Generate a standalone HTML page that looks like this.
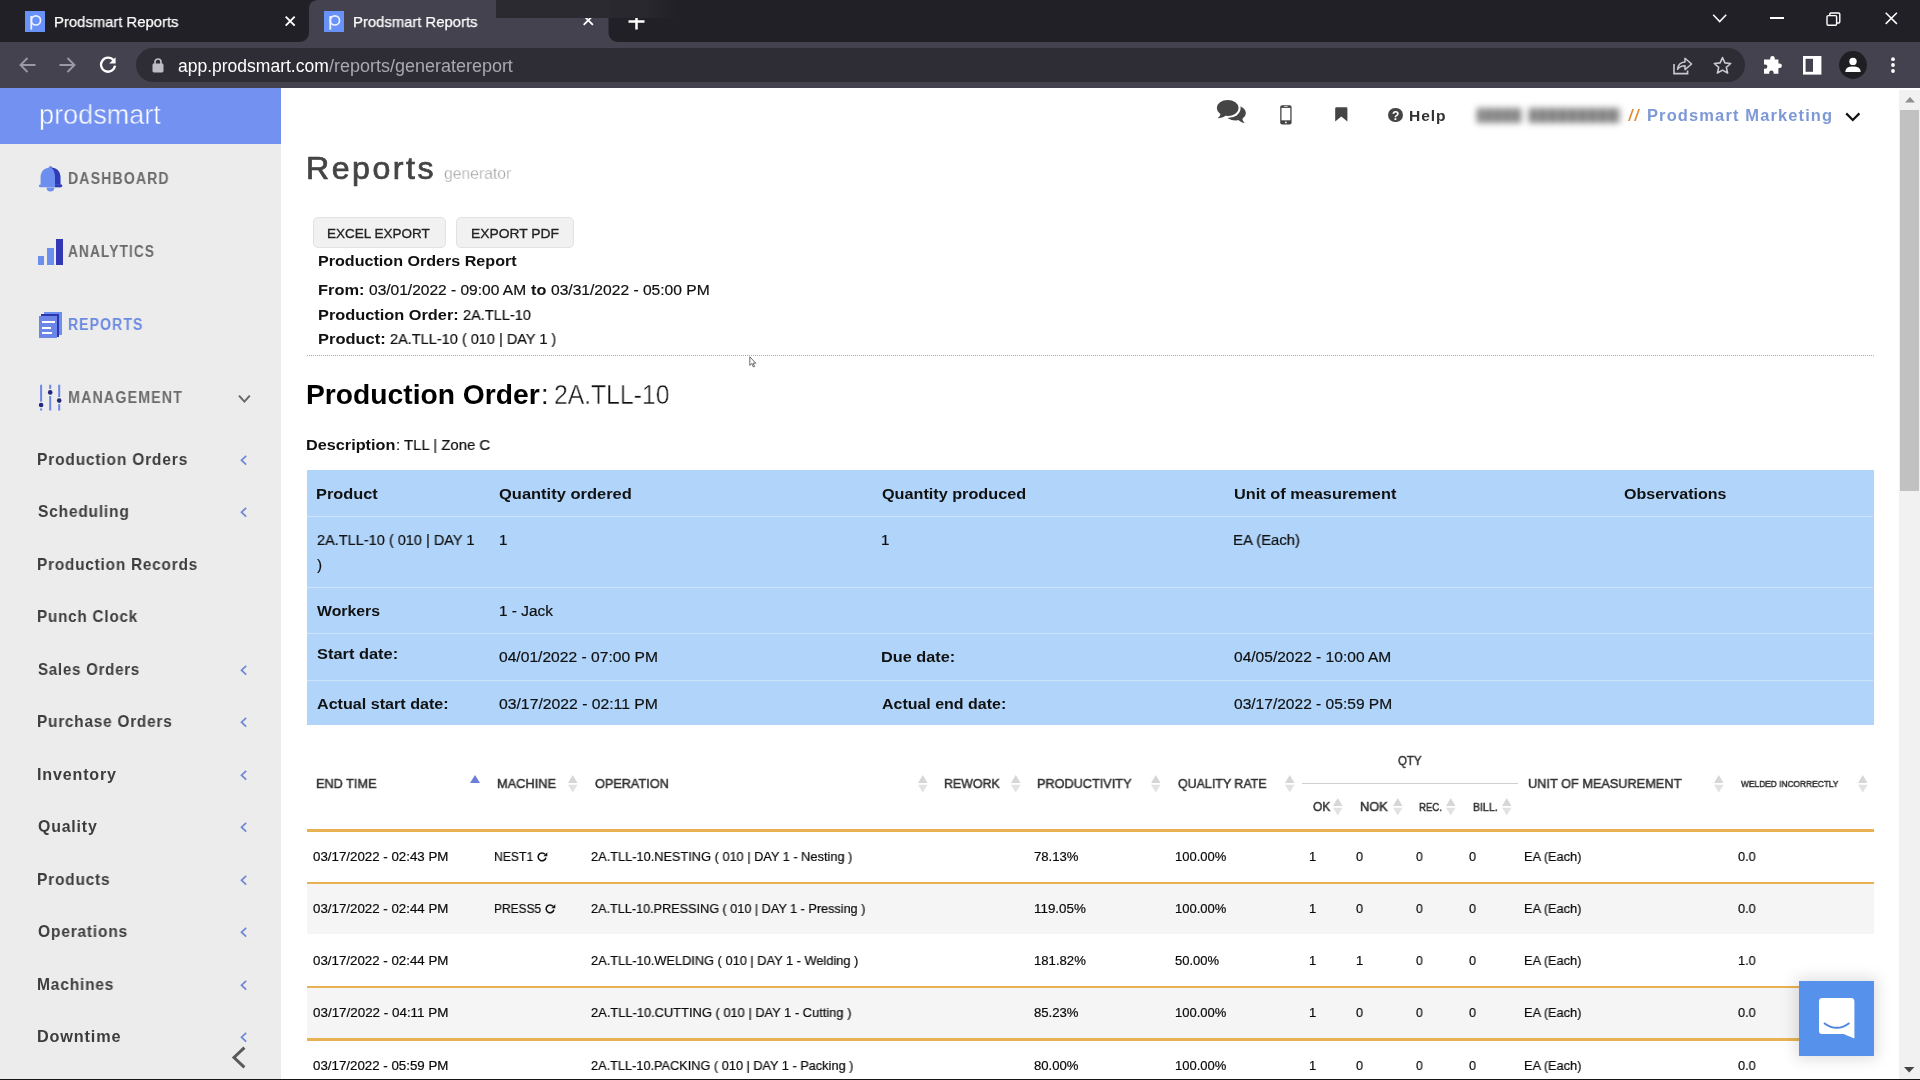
<!DOCTYPE html>
<html lang="en">
<head>
<meta charset="utf-8">
<title>Prodsmart Reports</title>
<style>
*{box-sizing:border-box;margin:0;padding:0}
html,body{width:1920px;height:1080px;overflow:hidden;background:#fff}
body{font-family:"Liberation Sans",sans-serif;color:#111;position:relative}
.a{position:absolute}
.t{position:absolute;white-space:nowrap;line-height:1;transform-origin:0 0;will-change:transform}
svg{position:absolute;overflow:visible}
.sb{-webkit-text-stroke:0.35px currentColor}
.r{-webkit-text-stroke:0.2px #0a0a0a}
</style>
</head>
<body>
<div class="a" style="left:0;top:0;width:1920px;height:42px;background:#212026"></div>
<div class="a" style="left:0;top:42px;width:1920px;height:46.4px;background:#43424e"></div>
<svg style="left:299.2px;top:0" width="320" height="42" viewBox="0 0 320 42"><path d="M0 42 C6 42 10 38 10 32 L10 9 C10 3.5 13.5 0 19 0 L300.5 0 C306 0 309.500 3.5 309.500 9 L309.500 32 C309.500 38 313.500 42 319.500 42 Z" fill="#43424e"/></svg>
<div class="a" style="left:496px;top:0;width:113px;height:18.4px;background:#2b2a30"></div>
<div class="a" style="left:24.7px;top:11px;width:20.5px;height:21px;background:#6892f8"></div><svg style="left:24.7px;top:11px" width="20.5" height="21" viewBox="0 0 20.5 21"><circle cx="10.9" cy="9.4" r="4.6" fill="none" stroke="#eef2ff" stroke-width="1.7"/><path d="M6.3 5 V18.6" stroke="#eef2ff" stroke-width="1.8" fill="none"/></svg>
<div class="a" style="left:323.7px;top:11px;width:20.5px;height:21px;background:#6892f8"></div><svg style="left:323.7px;top:11px" width="20.5" height="21" viewBox="0 0 20.5 21"><circle cx="10.9" cy="9.4" r="4.6" fill="none" stroke="#eef2ff" stroke-width="1.7"/><path d="M6.3 5 V18.6" stroke="#eef2ff" stroke-width="1.8" fill="none"/></svg>
<span class="t" style="left:54.31px;top:14.00px;font-size:15px;color:#fff;transform:scaleX(0.9890);-webkit-text-stroke:0.25px #fff;">Prodsmart Reports</span>
<span class="t" style="left:353.31px;top:14.00px;font-size:15px;color:#fff;transform:scaleX(0.9890);-webkit-text-stroke:0.25px #fff;">Prodsmart Reports</span>
<svg style="left:284.90000000000003px;top:16.1px" width="10.4" height="10.4" viewBox="0 0 10.4 10.4"><path d="M0.7 0.7 L9.700000000000001 9.700000000000001 M9.700000000000001 0.7 L0.7 9.700000000000001" stroke="#fff" stroke-width="1.9" fill="none"/></svg>
<svg style="left:583.4000000000001px;top:15.2px" width="10.6" height="10.6" viewBox="0 0 10.6 10.6"><path d="M0.7 0.7 L9.9 9.9 M9.9 0.7 L0.7 9.9" stroke="#fff" stroke-width="1.9" fill="none"/></svg>
<div class="a" style="left:580px;top:0;width:20px;height:18.4px;background:#2b2a30"></div>
<svg style="left:627.7px;top:12.8px" width="17" height="17" viewBox="0 0 17 17"><path d="M8.5 0.5 V16.5 M0.5 8.5 H16.5" stroke="#fff" stroke-width="2.5" fill="none"/></svg>
<div class="a" style="left:609px;top:0;width:70px;height:18.4px;background:linear-gradient(90deg,#29282e 0,#28272d 55%,#212026 100%)"></div>
<svg style="left:1712px;top:13px" width="16" height="11" viewBox="0 0 16 11"><path d="M1.2 1.8 L7.7 8.6 L14.2 1.8" stroke="#fff" stroke-width="1.5" fill="none"/></svg>
<div class="a" style="left:1769.5px;top:17px;width:14px;height:2px;background:#fff"></div>
<svg style="left:1826px;top:11.5px" width="15" height="15" viewBox="0 0 15 15"><rect x="1" y="3.6" width="9.6" height="9.6" rx="1.2" fill="none" stroke="#fff" stroke-width="1.4"/><path d="M3.8 3.4 V2.2 Q3.8 1 5 1 H12.6 Q13.8 1 13.8 2.2 V9.8 Q13.8 11 12.6 11 H11" fill="none" stroke="#fff" stroke-width="1.4"/></svg>
<svg style="left:1884.9px;top:12.099999999999998px" width="12.6" height="12.6" viewBox="0 0 12.6 12.6"><path d="M0.7 0.7 L11.9 11.9 M11.9 0.7 L0.7 11.9" stroke="#fff" stroke-width="1.5" fill="none"/></svg>
<svg style="left:19px;top:57px" width="17" height="16" viewBox="0 0 17 16"><path d="M16.5 8 H2 M8.5 1 L1.5 8 L8.5 15" stroke="#9a99a4" stroke-width="1.9" fill="none"/></svg>
<svg style="left:59px;top:57px" width="17" height="16" viewBox="0 0 17 16"><path d="M0.5 8 H15 M8.5 1 L15.5 8 L8.5 15" stroke="#9a99a4" stroke-width="1.9" fill="none"/></svg>
<svg style="left:99px;top:56px" width="18" height="18" viewBox="0 0 18 18"><path d="M14.6 4.4 A7 7 0 1 0 16 9.6" stroke="#fff" stroke-width="2.3" fill="none"/><path d="M16.6 1.2 V7.6 H10.2 Z" fill="#fff"/></svg>
<div class="a" style="left:136px;top:48px;width:1609px;height:34px;border-radius:17px;background:#2e2d35"></div>
<svg style="left:152px;top:58px" width="12" height="15" viewBox="0 0 12 15"><rect x="0.5" y="5.6" width="11" height="8.9" rx="1.4" fill="#bebdc6"/><path d="M3 6 V4 A3 3 0 0 1 9 4 V6" stroke="#bebdc6" stroke-width="1.7" fill="none"/></svg>
<span class="t" style="left:177.50px;top:58.00px;font-size:17.5px;color:#fff;">app.prodsmart.com</span>
<span class="t" style="left:329.00px;top:58.00px;font-size:17.5px;color:#a9a8b2;transform:scaleX(1.0272);">/reports/generatereport</span>
<svg style="left:1673px;top:56px" width="20" height="19" viewBox="0 0 20 19"><path d="M1 8 V17.6 H14.6 V14.6" stroke="#c9c8d1" stroke-width="1.6" fill="none"/><path d="M4.6 13.4 C5 8.6 8 6.2 12 6 V2.2 L18.6 8 L12 13.6 V9.8 C9 9.8 6.4 10.8 4.6 13.4 Z" stroke="#c9c8d1" stroke-width="1.5" fill="none" stroke-linejoin="round"/></svg>
<svg style="left:1713px;top:56px" width="19" height="18" viewBox="0 0 19 18"><path d="M9.5 1.6 L11.9 6.9 L17.7 7.5 L13.3 11.4 L14.6 17 L9.5 14.1 L4.4 17 L5.7 11.4 L1.3 7.5 L7.1 6.9 Z" stroke="#c9c8d1" stroke-width="1.6" fill="none" stroke-linejoin="round"/></svg>
<svg style="left:1763px;top:55px" width="20" height="20" viewBox="0 0 20 20"><path d="M7.2 3.4 A2.3 2.3 0 0 1 11.8 3.4 V4.6 H15.4 V8.4 H16.6 A2.3 2.3 0 0 1 16.6 13 H15.4 V18.8 H10.6 V17.6 A2.2 2.2 0 0 0 6.2 17.6 V18.8 H1 V13.8 H2.2 A2.2 2.2 0 0 0 2.2 9.4 H1 V4.6 H7.2 Z" fill="#fff"/></svg>
<svg style="left:1803px;top:55.5px" width="19" height="19" viewBox="0 0 19 19"><rect x="0" y="0" width="18.4" height="18.6" fill="#fff"/><rect x="2.6" y="2.8" width="7.4" height="13" fill="#43424e"/></svg>
<svg style="left:1838.6px;top:51.2px" width="28" height="28" viewBox="0 0 28 28"><circle cx="14" cy="14" r="13.9" fill="#1f1e23"/><circle cx="14" cy="10.4" r="3.7" fill="#fff"/><path d="M6.4 20.6 C6.4 16.6 10 15.4 14 15.4 C18 15.4 21.6 16.6 21.6 20.6 V21 H6.4 Z" fill="#fff"/></svg>
<svg style="left:1889.5px;top:56px" width="6" height="18" viewBox="0 0 6 18"><circle cx="3" cy="3.2" r="1.9" fill="#fff"/><circle cx="3" cy="9" r="1.9" fill="#fff"/><circle cx="3" cy="15" r="1.9" fill="#fff"/></svg>
<div class="a" style="left:0;top:88px;width:281px;height:992px;background:#ececec"></div>
<div class="a" style="left:0;top:88px;width:281px;height:56px;background:#7391f0"></div>
<span class="t" style="left:39.01px;top:101.00px;font-size:27.3px;color:#fff;transform:scaleX(0.9915);-webkit-text-stroke:0.45px #7391f0;">prodsmart</span>
<span class="t" style="left:67.87px;top:171.00px;font-size:16px;color:#6b6b6b;font-weight:bold;letter-spacing:1.3px;transform:scaleX(0.8795);">DASHBOARD</span>
<span class="t" style="left:68.00px;top:244.00px;font-size:16px;color:#6b6b6b;font-weight:bold;letter-spacing:1.3px;transform:scaleX(0.8555);">ANALYTICS</span>
<span class="t" style="left:67.88px;top:317.00px;font-size:16px;color:#6c8ae2;font-weight:bold;letter-spacing:1.3px;transform:scaleX(0.8731);">REPORTS</span>
<span class="t" style="left:67.86px;top:390.00px;font-size:16px;color:#6b6b6b;font-weight:bold;letter-spacing:1.3px;transform:scaleX(0.8892);">MANAGEMENT</span>
<svg style="left:38px;top:165px" width="25" height="28" viewBox="0 0 25 28"><path d="M8.6 22.6 A3.9 3.9 0 0 0 16.4 22.6 Z" fill="#6c8eef"/><circle cx="12.5" cy="2.6" r="1.7" fill="#6c8eef"/><path d="M2.6 20 V12.2 C2.6 6 6.6 2.4 12.5 2.4 C18.4 2.4 22.4 6 22.4 12.2 V20 Z" fill="#6c8eef"/><path d="M12.5 2.4 C18.4 2.4 22.4 6 22.4 12.2 V20 H17 V12 C17 7 15.4 3.6 12.5 2.4 Z" fill="#2f3bb7"/><rect x="0.9" y="19.4" width="23.3" height="2.9" rx="1.4" fill="#6c8eef"/><path d="M17 19.4 H22.8 A1.4 1.4 0 0 1 22.8 22.3 H17 Z" fill="#2f3bb7"/></svg>
<div class="a" style="left:37.8px;top:256.1px;width:6.5px;height:8.8px;background:#6c8eef"></div>
<div class="a" style="left:47px;top:248.1px;width:6.7px;height:16.8px;background:#6c8eef"></div>
<div class="a" style="left:56.1px;top:238.9px;width:6.7px;height:26px;background:#3538b4"></div>
<div class="a" style="left:43.9px;top:311.7px;width:17.8px;height:23.3px;background:#6c8eef"></div>
<div class="a" style="left:41.1px;top:313.9px;width:18.3px;height:22.8px;background:#2b36b0"></div>
<div class="a" style="left:38.9px;top:316.1px;width:18.3px;height:21.7px;background:#6b86e6"></div>
<div class="a" style="left:41.7px;top:320.6px;width:13px;height:2.2px;background:#fff"></div>
<div class="a" style="left:41.7px;top:326.6px;width:9.4px;height:2.1px;background:#fff"></div>
<div class="a" style="left:41.7px;top:332.2px;width:10.6px;height:2.2px;background:#fff"></div>
<svg style="left:38px;top:384px" width="25" height="28" viewBox="0 0 25 28"><path d="M3.1 0.7 V26.6 M12.2 0.7 V26.6 M21.2 0.7 V26.6" stroke="#6b86e6" stroke-width="2"/><circle cx="3.1" cy="21" r="3.6" fill="#ececec"/><circle cx="12.2" cy="8.4" r="3.6" fill="#ececec"/><circle cx="21.2" cy="16.6" r="3.6" fill="#ececec"/><circle cx="3.1" cy="21" r="2.3" fill="#23277f"/><circle cx="12.2" cy="8.4" r="2.3" fill="#23277f"/><circle cx="21.2" cy="16.6" r="2.3" fill="#23277f"/></svg>
<svg style="left:238px;top:394px" width="13" height="10" viewBox="0 0 13 10"><path d="M1 1.6 L6.4 7.6 L11.8 1.6" stroke="#666" stroke-width="2" fill="none"/></svg>
<span class="t" style="left:37.01px;top:452.00px;font-size:15.7px;color:#3d3d3d;font-weight:bold;letter-spacing:0.8px;transform:scaleX(0.9923);">Production Orders</span>
<svg style="left:239.6px;top:455.40px" width="7.4" height="10.4" viewBox="0 0 7.4 10.4"><path d="M6.2 0.8 L1.5 5.2 L6.2 9.600" stroke="#6d87d6" stroke-width="1.7" fill="none"/></svg>
<span class="t" style="left:38.00px;top:504.00px;font-size:15.7px;color:#3d3d3d;font-weight:bold;letter-spacing:0.8px;transform:scaleX(0.9900);">Scheduling</span>
<svg style="left:239.6px;top:507.40px" width="7.4" height="10.4" viewBox="0 0 7.4 10.4"><path d="M6.2 0.8 L1.5 5.2 L6.2 9.600" stroke="#6d87d6" stroke-width="1.7" fill="none"/></svg>
<span class="t" style="left:37.02px;top:557.00px;font-size:15.7px;color:#3d3d3d;font-weight:bold;letter-spacing:0.8px;transform:scaleX(0.9798);">Production Records</span>
<span class="t" style="left:37.03px;top:609.00px;font-size:15.7px;color:#3d3d3d;font-weight:bold;letter-spacing:0.8px;transform:scaleX(0.9727);">Punch Clock</span>
<span class="t" style="left:38.00px;top:662.00px;font-size:15.7px;color:#3d3d3d;font-weight:bold;letter-spacing:0.8px;transform:scaleX(0.9587);">Sales Orders</span>
<svg style="left:239.6px;top:665.40px" width="7.4" height="10.4" viewBox="0 0 7.4 10.4"><path d="M6.2 0.8 L1.5 5.2 L6.2 9.600" stroke="#6d87d6" stroke-width="1.7" fill="none"/></svg>
<span class="t" style="left:37.02px;top:714.00px;font-size:15.7px;color:#3d3d3d;font-weight:bold;letter-spacing:0.8px;transform:scaleX(0.9787);">Purchase Orders</span>
<svg style="left:239.6px;top:717.40px" width="7.4" height="10.4" viewBox="0 0 7.4 10.4"><path d="M6.2 0.8 L1.5 5.2 L6.2 9.600" stroke="#6d87d6" stroke-width="1.7" fill="none"/></svg>
<span class="t" style="left:36.97px;top:767.00px;font-size:15.7px;color:#3d3d3d;font-weight:bold;letter-spacing:0.8px;transform:scaleX(1.0258);">Inventory</span>
<svg style="left:239.6px;top:770.40px" width="7.4" height="10.4" viewBox="0 0 7.4 10.4"><path d="M6.2 0.8 L1.5 5.2 L6.2 9.600" stroke="#6d87d6" stroke-width="1.7" fill="none"/></svg>
<span class="t" style="left:38.00px;top:819.00px;font-size:15.7px;color:#3d3d3d;font-weight:bold;letter-spacing:0.8px;transform:scaleX(1.0129);">Quality</span>
<svg style="left:239.6px;top:822.40px" width="7.4" height="10.4" viewBox="0 0 7.4 10.4"><path d="M6.2 0.8 L1.5 5.2 L6.2 9.600" stroke="#6d87d6" stroke-width="1.7" fill="none"/></svg>
<span class="t" style="left:37.01px;top:872.00px;font-size:15.7px;color:#3d3d3d;font-weight:bold;letter-spacing:0.8px;transform:scaleX(0.9881);">Products</span>
<svg style="left:239.6px;top:875.40px" width="7.4" height="10.4" viewBox="0 0 7.4 10.4"><path d="M6.2 0.8 L1.5 5.2 L6.2 9.600" stroke="#6d87d6" stroke-width="1.7" fill="none"/></svg>
<span class="t" style="left:38.00px;top:924.00px;font-size:15.7px;color:#3d3d3d;font-weight:bold;letter-spacing:0.8px;transform:scaleX(0.9913);">Operations</span>
<svg style="left:239.6px;top:927.40px" width="7.4" height="10.4" viewBox="0 0 7.4 10.4"><path d="M6.2 0.8 L1.5 5.2 L6.2 9.600" stroke="#6d87d6" stroke-width="1.7" fill="none"/></svg>
<span class="t" style="left:37.01px;top:977.00px;font-size:15.7px;color:#3d3d3d;font-weight:bold;letter-spacing:0.8px;transform:scaleX(0.9919);">Machines</span>
<svg style="left:239.6px;top:980.40px" width="7.4" height="10.4" viewBox="0 0 7.4 10.4"><path d="M6.2 0.8 L1.5 5.2 L6.2 9.600" stroke="#6d87d6" stroke-width="1.7" fill="none"/></svg>
<span class="t" style="left:36.96px;top:1029.00px;font-size:15.7px;color:#3d3d3d;font-weight:bold;letter-spacing:0.8px;transform:scaleX(1.0366);">Downtime</span>
<svg style="left:239.6px;top:1032.40px" width="7.4" height="10.4" viewBox="0 0 7.4 10.4"><path d="M6.2 0.8 L1.5 5.2 L6.2 9.600" stroke="#6d87d6" stroke-width="1.7" fill="none"/></svg>
<svg style="left:231px;top:1046px" width="16" height="23" viewBox="0 0 16 23"><path d="M13.4 1.6 L3 11.5 L13.4 21.4" stroke="#5a5a5a" stroke-width="3" fill="none"/></svg>
<svg style="left:1216px;top:99px" width="31" height="25" viewBox="0 0 31 25"><ellipse cx="19.5" cy="14" rx="10.4" ry="7.4" fill="#454545"/><path d="M22 20.4 C24.2 22.6 26.4 23.6 28.6 23.9 C27.2 22.6 26.5 21 26.3 19 Z" fill="#454545"/><ellipse cx="11.7" cy="9" rx="12.9" ry="10.1" fill="#fff"/><path d="M3.2 14 C3 16.8 2 18.600 0 20.600 C4.4 20.600 8.4 19.2 11.4 17 Z" fill="#fff"/><ellipse cx="11.7" cy="9" rx="10.9" ry="8.1" fill="#454545"/><path d="M4.600 14.4 C4.3 16.4 3.2 18 1.6 19.3 C4.600 19.100 7.600 18.2 9.800 16.5 Z" fill="#454545"/></svg>
<svg style="left:1280.3px;top:105.4px" width="12" height="20" viewBox="0 0 12 20"><rect x="0.2" y="0.2" width="11.4" height="19.2" rx="1.9" fill="#454545"/><rect x="1.5" y="2.9" width="8.8" height="12.4" fill="#fff"/><circle cx="5.9" cy="17.4" r="0.9" fill="#fff"/><rect x="4.2" y="1.2" width="3.4" height="0.7" fill="#fff"/></svg>
<svg style="left:1335px;top:107.2px" width="13" height="15" viewBox="0 0 13 15"><path d="M0.2 1.4 Q0.2 0.2 1.4 0.2 H11.2 Q12.4 0.2 12.4 1.4 V14.6 L6.3 9.6 L0.2 14.6 Z" fill="#454545"/></svg>
<div class="a" style="left:1388.2px;top:107.9px;width:14.6px;height:14.6px;border-radius:50%;background:#454545"></div>
<span class="t" style="left:1392.30px;top:110.00px;font-size:12px;color:#fff;font-weight:bold;">?</span>
<span class="t" style="left:1408.69px;top:108.00px;font-size:15.5px;color:#333;font-weight:bold;letter-spacing:0.9px;transform:scaleX(1.0052);">Help</span>
<div class="a" style="left:1470px;top:100px;width:158px;height:32px;filter:blur(3.1px)"><div class="a" style="left:7px;top:8px;width:45px;height:15px;background:repeating-linear-gradient(90deg,#7a7a7a 0,#7a7a7a 6px,#adadad 6px,#adadad 9px)"></div><div class="a" style="left:59px;top:8px;width:91px;height:15px;background:repeating-linear-gradient(90deg,#7a7a7a 0,#7a7a7a 7px,#adadad 7px,#adadad 10px)"></div></div>
<span class="t" style="left:1628.40px;top:108.00px;font-size:16px;color:#e08a2e;transform:scaleX(1.3340);">//</span>
<span class="t" style="left:1646.97px;top:108.00px;font-size:16px;color:#7d98d6;font-weight:bold;letter-spacing:1.1px;transform:scaleX(1.0294);">Prodsmart Marketing</span>
<svg style="left:1845px;top:111.5px" width="16" height="10" viewBox="0 0 16 10"><path d="M1.2 1.4 L7.8 8 L14.4 1.4" stroke="#111" stroke-width="2.2" fill="none"/></svg>
<span class="t" style="left:305.91px;top:154.00px;font-size:30.7px;color:#444;letter-spacing:2.4px;transform:scaleX(1.0460);-webkit-text-stroke:0.7px #444;">Reports</span>
<span class="t" style="left:444.00px;top:165.00px;font-size:16.2px;color:#a2a2a2;transform:scaleX(0.9685);-webkit-text-stroke:0.3px #fff;">generator</span>
<div class="a" style="left:313px;top:217px;width:133.3px;height:30.5px;background:#f1f1f1;border:1.5px solid #e2e2e2;border-radius:5px"></div>
<span class="t" style="left:327.28px;top:227.00px;font-size:13.3px;color:#222;transform:scaleX(1.0158);-webkit-text-stroke:0.3px #222;">EXCEL EXPORT</span>
<div class="a" style="left:456.3px;top:217px;width:117.69999999999999px;height:30.5px;background:#f1f1f1;border:1.5px solid #e2e2e2;border-radius:5px"></div>
<span class="t" style="left:470.66px;top:227.00px;font-size:13.3px;color:#222;transform:scaleX(1.0407);-webkit-text-stroke:0.3px #222;">EXPORT PDF</span>
<span class="t" style="left:318.44px;top:253.00px;font-size:15.2px;color:#111;font-weight:bold;transform:scaleX(1.0603);">Production Orders Report</span>
<span class="t" style="left:318.42px;top:282.00px;font-size:15.2px;color:#111;font-weight:bold;transform:scaleX(1.0801);">From:</span>
<span class="t r" style="left:368.75px;top:282.00px;font-size:15.2px;color:#111;transform:scaleX(1.0220);">03/01/2022 - 09:00 AM</span>
<span class="t" style="left:531.00px;top:282.00px;font-size:15.2px;color:#111;font-weight:bold;transform:scaleX(1.0670);">to</span>
<span class="t r" style="left:550.75px;top:282.00px;font-size:15.2px;color:#111;transform:scaleX(1.0269);">03/31/2022 - 05:00 PM</span>
<span class="t" style="left:318.42px;top:307.00px;font-size:15.2px;color:#111;font-weight:bold;transform:scaleX(1.0759);">Production Order:</span>
<span class="t r" style="left:463.00px;top:307.00px;font-size:15.2px;color:#111;transform:scaleX(0.9578);">2A.TLL-10</span>
<span class="t" style="left:318.42px;top:331.00px;font-size:15.2px;color:#111;font-weight:bold;transform:scaleX(1.0849);">Product:</span>
<span class="t r" style="left:389.50px;top:331.00px;font-size:15.2px;color:#111;transform:scaleX(0.9562);">2A.TLL-10 ( 010 | DAY 1 )</span>
<div class="a" style="left:307px;top:354.6px;width:1567px;height:0;border-top:1.4px dotted #a8a8a8"></div>
<svg style="left:749px;top:355.5px" width="8" height="12" viewBox="0 0 8 12"><path d="M0.8 0.8 V9.4 L2.8 7.6 L4.4 11 L5.6 10.4 L4 7.2 H6.8 Z" fill="#fff" stroke="#444" stroke-width="0.8"/></svg>
<span class="t" style="left:306.47px;top:381.00px;font-size:27.4px;color:#000;font-weight:bold;transform:scaleX(1.0306);">Production Order</span>
<span class="t" style="left:541.20px;top:381.00px;font-size:27.4px;color:#111;">:</span>
<span class="t" style="left:554.10px;top:381.00px;font-size:27.4px;color:#111;transform:scaleX(0.9020);-webkit-text-stroke:0.45px #fff;">2A.TLL-10</span>
<span class="t" style="left:305.93px;top:437.00px;font-size:15.2px;color:#111;font-weight:bold;transform:scaleX(1.0697);">Description</span>
<span class="t r" style="left:395.60px;top:437.00px;font-size:15.2px;color:#111;">:</span>
<span class="t r" style="left:403.75px;top:437.00px;font-size:15.2px;color:#111;transform:scaleX(0.9814);">TLL | Zone C</span>
<div class="a" style="left:307px;top:469.5px;width:1567px;height:255.5px;background:#b1d5fa"></div>
<div class="a" style="left:307px;top:516px;width:1566px;height:1.2px;background:#cde3f9"></div>
<div class="a" style="left:307px;top:587px;width:1566px;height:1.2px;background:#cde3f9"></div>
<div class="a" style="left:307px;top:633.2px;width:1566px;height:1.2px;background:#cde3f9"></div>
<div class="a" style="left:307px;top:679.5px;width:1566px;height:1.2px;background:#cde3f9"></div>
<span class="t" style="left:315.93px;top:486.00px;font-size:15.2px;color:#111;font-weight:bold;transform:scaleX(1.0743);">Product</span>
<span class="t" style="left:499.25px;top:486.00px;font-size:15.2px;color:#111;font-weight:bold;transform:scaleX(1.0853);">Quantity ordered</span>
<span class="t" style="left:881.75px;top:486.00px;font-size:15.2px;color:#111;font-weight:bold;transform:scaleX(1.0670);">Quantity produced</span>
<span class="t" style="left:1233.75px;top:486.00px;font-size:15.2px;color:#111;font-weight:bold;transform:scaleX(1.0745);">Unit of measurement</span>
<span class="t" style="left:1623.50px;top:486.00px;font-size:15.2px;color:#111;font-weight:bold;transform:scaleX(1.0557);">Observations</span>
<span class="t r" style="left:317.00px;top:532.00px;font-size:15.2px;color:#111;transform:scaleX(0.9562);">2A.TLL-10 ( 010 | DAY 1</span>
<span class="t r" style="left:316.60px;top:557.00px;font-size:15.2px;color:#111;">)</span>
<span class="t r" style="left:498.60px;top:532.00px;font-size:15.2px;color:#111;">1</span>
<span class="t r" style="left:881.00px;top:532.00px;font-size:15.2px;color:#111;">1</span>
<span class="t r" style="left:1232.77px;top:532.00px;font-size:15.2px;color:#111;transform:scaleX(0.9794);">EA (Each)</span>
<span class="t" style="left:317.00px;top:603.00px;font-size:15.2px;color:#111;font-weight:bold;transform:scaleX(1.0408);">Workers</span>
<span class="t r" style="left:498.99px;top:603.00px;font-size:15.2px;color:#111;transform:scaleX(1.0128);">1 - Jack</span>
<span class="t" style="left:317.00px;top:646.00px;font-size:15.2px;color:#111;font-weight:bold;transform:scaleX(1.0804);">Start date:</span>
<span class="t r" style="left:499.25px;top:649.00px;font-size:15.2px;color:#111;transform:scaleX(1.0285);">04/01/2022 - 07:00 PM</span>
<span class="t" style="left:880.83px;top:649.00px;font-size:15.2px;color:#111;font-weight:bold;transform:scaleX(1.0724);">Due date:</span>
<span class="t r" style="left:1233.90px;top:649.00px;font-size:15.2px;color:#111;transform:scaleX(1.0236);">04/05/2022 - 10:00 AM</span>
<span class="t" style="left:317.00px;top:696.00px;font-size:15.2px;color:#111;font-weight:bold;transform:scaleX(1.0610);">Actual start date:</span>
<span class="t r" style="left:499.25px;top:696.00px;font-size:15.2px;color:#111;transform:scaleX(1.0361);">03/17/2022 - 02:11 PM</span>
<span class="t" style="left:881.90px;top:696.00px;font-size:15.2px;color:#111;font-weight:bold;transform:scaleX(1.0514);">Actual end date:</span>
<span class="t r" style="left:1233.90px;top:696.00px;font-size:15.2px;color:#111;transform:scaleX(1.0236);">03/17/2022 - 05:59 PM</span>
<span class="t" style="left:316.04px;top:777.00px;font-size:13.2px;color:#333;transform:scaleX(0.9644);-webkit-text-stroke:0.5px #333;">END TIME</span>
<span class="t" style="left:497.03px;top:777.00px;font-size:13.2px;color:#333;transform:scaleX(0.9706);-webkit-text-stroke:0.5px #333;">MACHINE</span>
<span class="t" style="left:595.00px;top:777.00px;font-size:13.2px;color:#333;transform:scaleX(0.9617);-webkit-text-stroke:0.5px #333;">OPERATION</span>
<span class="t" style="left:944.06px;top:777.00px;font-size:13.2px;color:#333;transform:scaleX(0.9394);-webkit-text-stroke:0.5px #333;">REWORK</span>
<span class="t" style="left:1037.04px;top:777.00px;font-size:13.2px;color:#333;transform:scaleX(0.9627);-webkit-text-stroke:0.5px #333;">PRODUCTIVITY</span>
<span class="t" style="left:1178.00px;top:777.00px;font-size:13.2px;color:#333;transform:scaleX(0.9419);-webkit-text-stroke:0.5px #333;">QUALITY RATE</span>
<span class="t" style="left:1398.00px;top:754.00px;font-size:13.2px;color:#333;transform:scaleX(0.8695);-webkit-text-stroke:0.5px #333;">QTY</span>
<span class="t" style="left:1312.50px;top:800.00px;font-size:13.2px;color:#333;transform:scaleX(0.9087);-webkit-text-stroke:0.5px #333;">OK</span>
<span class="t" style="left:1359.53px;top:800.00px;font-size:13.2px;color:#333;transform:scaleX(0.9719);-webkit-text-stroke:0.5px #333;">NOK</span>
<span class="t" style="left:1419.25px;top:802.00px;font-size:11.5px;color:#333;transform:scaleX(0.8339);-webkit-text-stroke:0.5px #333;">REC.</span>
<span class="t" style="left:1472.50px;top:802.00px;font-size:11.5px;color:#333;transform:scaleX(0.9191);-webkit-text-stroke:0.5px #333;">BILL.</span>
<span class="t" style="left:1527.78px;top:777.00px;font-size:13.2px;color:#333;transform:scaleX(0.9656);-webkit-text-stroke:0.5px #333;">UNIT OF MEASUREMENT</span>
<span class="t" style="left:1740.70px;top:780.00px;font-size:9.3px;color:#333;transform:scaleX(0.9001);-webkit-text-stroke:0.5px #333;">WELDED INCORRECTLY</span>
<div class="a" style="left:1302px;top:783px;width:215.5px;height:1px;background:#d0d0d0"></div>
<svg style="left:470px;top:775px" width="10" height="8" viewBox="0 0 10 8"><path d="M5 0 L10 8 H0 Z" fill="#6c7fd8"/></svg>
<svg style="left:568px;top:775px" width="9.5" height="17.5" viewBox="0 0 9.5 17.5"><path d="M4.75 0 L9.5 8 H0 Z" fill="#d6d6d6"/><path d="M0 9.8 H9.5 L4.75 17.5 Z" fill="#e2e2e2"/></svg>
<svg style="left:917.5px;top:775px" width="9.5" height="17.5" viewBox="0 0 9.5 17.5"><path d="M4.75 0 L9.5 8 H0 Z" fill="#d6d6d6"/><path d="M0 9.8 H9.5 L4.75 17.5 Z" fill="#e2e2e2"/></svg>
<svg style="left:1010.5px;top:775px" width="9.5" height="17.5" viewBox="0 0 9.5 17.5"><path d="M4.75 0 L9.5 8 H0 Z" fill="#d6d6d6"/><path d="M0 9.8 H9.5 L4.75 17.5 Z" fill="#e2e2e2"/></svg>
<svg style="left:1150.75px;top:775px" width="9.5" height="17.5" viewBox="0 0 9.5 17.5"><path d="M4.75 0 L9.5 8 H0 Z" fill="#d6d6d6"/><path d="M0 9.8 H9.5 L4.75 17.5 Z" fill="#e2e2e2"/></svg>
<svg style="left:1285px;top:775px" width="9.5" height="17.5" viewBox="0 0 9.5 17.5"><path d="M4.75 0 L9.5 8 H0 Z" fill="#d6d6d6"/><path d="M0 9.8 H9.5 L4.75 17.5 Z" fill="#e2e2e2"/></svg>
<svg style="left:1713.75px;top:775px" width="9.5" height="17.5" viewBox="0 0 9.5 17.5"><path d="M4.75 0 L9.5 8 H0 Z" fill="#d6d6d6"/><path d="M0 9.8 H9.5 L4.75 17.5 Z" fill="#e2e2e2"/></svg>
<svg style="left:1857.5px;top:775px" width="9.5" height="17.5" viewBox="0 0 9.5 17.5"><path d="M4.75 0 L9.5 8 H0 Z" fill="#d6d6d6"/><path d="M0 9.8 H9.5 L4.75 17.5 Z" fill="#e2e2e2"/></svg>
<svg style="left:1333px;top:798px" width="9.5" height="17.5" viewBox="0 0 9.5 17.5"><path d="M4.75 0 L9.5 8 H0 Z" fill="#d6d6d6"/><path d="M0 9.8 H9.5 L4.75 17.5 Z" fill="#e2e2e2"/></svg>
<svg style="left:1392.5px;top:798px" width="9.5" height="17.5" viewBox="0 0 9.5 17.5"><path d="M4.75 0 L9.5 8 H0 Z" fill="#d6d6d6"/><path d="M0 9.8 H9.5 L4.75 17.5 Z" fill="#e2e2e2"/></svg>
<svg style="left:1445.5px;top:798px" width="9.5" height="17.5" viewBox="0 0 9.5 17.5"><path d="M4.75 0 L9.5 8 H0 Z" fill="#d6d6d6"/><path d="M0 9.8 H9.5 L4.75 17.5 Z" fill="#e2e2e2"/></svg>
<svg style="left:1501.75px;top:798px" width="9.5" height="17.5" viewBox="0 0 9.5 17.5"><path d="M4.75 0 L9.5 8 H0 Z" fill="#d6d6d6"/><path d="M0 9.8 H9.5 L4.75 17.5 Z" fill="#e2e2e2"/></svg>
<div class="a" style="left:307px;top:829.30px;width:1567px;height:2.3px;background:#e8b252"></div>
<span class="t r" style="left:313.00px;top:850.00px;font-size:13px;color:#0a0a0a;transform:scaleX(1.0234);">03/17/2022 - 02:43 PM</span>
<span class="t r" style="left:493.57px;top:850.00px;font-size:13px;color:#0a0a0a;transform:scaleX(0.9343);">NEST1</span>
<svg style="left:536.80px;top:852.40px" width="10.5" height="10" viewBox="0 0 10.5 10"><path d="M8 2.3 A3.9 3.9 0 1 0 8.9 5.6" stroke="#111" stroke-width="1.6" fill="none"/><path d="M10.3 0.3 V4.3 H6.3 Z" fill="#111"/></svg>
<span class="t r" style="left:590.75px;top:850.00px;font-size:13px;color:#0a0a0a;transform:scaleX(0.9829);">2A.TLL-10.NESTING ( 010 | DAY 1 - Nesting )</span>
<span class="t r" style="left:1034.25px;top:850.00px;font-size:13px;color:#0a0a0a;transform:scaleX(1.0105);">78.13%</span>
<span class="t r" style="left:1174.50px;top:850.00px;font-size:13px;color:#0a0a0a;">100.00%</span>
<span class="t r" style="left:1309.00px;top:850.00px;font-size:13px;color:#0a0a0a;">1</span>
<span class="t r" style="left:1355.75px;top:850.00px;font-size:13px;color:#0a0a0a;transform:scaleX(0.9643);">0</span>
<span class="t r" style="left:1415.50px;top:850.00px;font-size:13px;color:#0a0a0a;transform:scaleX(0.9286);">0</span>
<span class="t r" style="left:1468.75px;top:850.00px;font-size:13px;color:#0a0a0a;transform:scaleX(0.9643);">0</span>
<span class="t r" style="left:1523.52px;top:850.00px;font-size:13px;color:#0a0a0a;transform:scaleX(0.9799);">EA (Each)</span>
<span class="t r" style="left:1737.50px;top:850.00px;font-size:13px;color:#0a0a0a;transform:scaleX(0.9808);">0.0</span>
<div class="a" style="left:307px;top:881.75px;width:1567px;height:52.25px;background:#f5f5f5"></div>
<div class="a" style="left:307px;top:881.55px;width:1567px;height:2.3px;background:#e8b252"></div>
<span class="t r" style="left:313.00px;top:902.00px;font-size:13px;color:#0a0a0a;transform:scaleX(1.0234);">03/17/2022 - 02:44 PM</span>
<span class="t r" style="left:493.58px;top:902.00px;font-size:13px;color:#0a0a0a;transform:scaleX(0.9187);">PRESS5</span>
<svg style="left:544.80px;top:904.40px" width="10.5" height="10" viewBox="0 0 10.5 10"><path d="M8 2.3 A3.9 3.9 0 1 0 8.9 5.6" stroke="#111" stroke-width="1.6" fill="none"/><path d="M10.3 0.3 V4.3 H6.3 Z" fill="#111"/></svg>
<span class="t r" style="left:590.75px;top:902.00px;font-size:13px;color:#0a0a0a;transform:scaleX(0.9736);">2A.TLL-10.PRESSING ( 010 | DAY 1 - Pressing )</span>
<span class="t r" style="left:1034.25px;top:902.00px;font-size:13px;color:#0a0a0a;transform:scaleX(1.0286);">119.05%</span>
<span class="t r" style="left:1174.50px;top:902.00px;font-size:13px;color:#0a0a0a;">100.00%</span>
<span class="t r" style="left:1309.00px;top:902.00px;font-size:13px;color:#0a0a0a;">1</span>
<span class="t r" style="left:1355.75px;top:902.00px;font-size:13px;color:#0a0a0a;transform:scaleX(0.9643);">0</span>
<span class="t r" style="left:1415.50px;top:902.00px;font-size:13px;color:#0a0a0a;transform:scaleX(0.9286);">0</span>
<span class="t r" style="left:1468.75px;top:902.00px;font-size:13px;color:#0a0a0a;transform:scaleX(0.9643);">0</span>
<span class="t r" style="left:1523.52px;top:902.00px;font-size:13px;color:#0a0a0a;transform:scaleX(0.9799);">EA (Each)</span>
<span class="t r" style="left:1737.50px;top:902.00px;font-size:13px;color:#0a0a0a;transform:scaleX(0.9808);">0.0</span>
<span class="t r" style="left:313.00px;top:954.00px;font-size:13px;color:#0a0a0a;transform:scaleX(1.0234);">03/17/2022 - 02:44 PM</span>
<span class="t r" style="left:590.75px;top:954.00px;font-size:13px;color:#0a0a0a;transform:scaleX(0.9850);">2A.TLL-10.WELDING ( 010 | DAY 1 - Welding )</span>
<span class="t r" style="left:1034.25px;top:954.00px;font-size:13px;color:#0a0a0a;transform:scaleX(1.0094);">181.82%</span>
<span class="t r" style="left:1174.50px;top:954.00px;font-size:13px;color:#0a0a0a;">50.00%</span>
<span class="t r" style="left:1309.00px;top:954.00px;font-size:13px;color:#0a0a0a;">1</span>
<span class="t r" style="left:1356.00px;top:954.00px;font-size:13px;color:#0a0a0a;">1</span>
<span class="t r" style="left:1415.50px;top:954.00px;font-size:13px;color:#0a0a0a;transform:scaleX(0.9286);">0</span>
<span class="t r" style="left:1468.75px;top:954.00px;font-size:13px;color:#0a0a0a;transform:scaleX(0.9643);">0</span>
<span class="t r" style="left:1523.52px;top:954.00px;font-size:13px;color:#0a0a0a;transform:scaleX(0.9799);">EA (Each)</span>
<span class="t r" style="left:1737.50px;top:954.00px;font-size:13px;color:#0a0a0a;transform:scaleX(0.9808);">1.0</span>
<div class="a" style="left:307px;top:986.25px;width:1567px;height:52.25px;background:#f5f5f5"></div>
<div class="a" style="left:307px;top:986.05px;width:1567px;height:2.3px;background:#e8b252"></div>
<span class="t r" style="left:313.00px;top:1006.00px;font-size:13px;color:#0a0a0a;transform:scaleX(1.0309);">03/17/2022 - 04:11 PM</span>
<span class="t r" style="left:590.75px;top:1006.00px;font-size:13px;color:#0a0a0a;transform:scaleX(0.9900);">2A.TLL-10.CUTTING ( 010 | DAY 1 - Cutting )</span>
<span class="t r" style="left:1034.25px;top:1006.00px;font-size:13px;color:#0a0a0a;transform:scaleX(1.0105);">85.23%</span>
<span class="t r" style="left:1174.50px;top:1006.00px;font-size:13px;color:#0a0a0a;">100.00%</span>
<span class="t r" style="left:1309.00px;top:1006.00px;font-size:13px;color:#0a0a0a;">1</span>
<span class="t r" style="left:1355.75px;top:1006.00px;font-size:13px;color:#0a0a0a;transform:scaleX(0.9643);">0</span>
<span class="t r" style="left:1415.50px;top:1006.00px;font-size:13px;color:#0a0a0a;transform:scaleX(0.9286);">0</span>
<span class="t r" style="left:1468.75px;top:1006.00px;font-size:13px;color:#0a0a0a;transform:scaleX(0.9643);">0</span>
<span class="t r" style="left:1523.52px;top:1006.00px;font-size:13px;color:#0a0a0a;transform:scaleX(0.9799);">EA (Each)</span>
<span class="t r" style="left:1737.50px;top:1006.00px;font-size:13px;color:#0a0a0a;transform:scaleX(0.9808);">0.0</span>
<div class="a" style="left:307px;top:1038.30px;width:1567px;height:2.3px;background:#e8b252"></div>
<span class="t r" style="left:313.00px;top:1059.00px;font-size:13px;color:#0a0a0a;transform:scaleX(1.0234);">03/17/2022 - 05:59 PM</span>
<span class="t r" style="left:590.75px;top:1059.00px;font-size:13px;color:#0a0a0a;transform:scaleX(0.9795);">2A.TLL-10.PACKING ( 010 | DAY 1 - Packing )</span>
<span class="t r" style="left:1034.25px;top:1059.00px;font-size:13px;color:#0a0a0a;transform:scaleX(1.0105);">80.00%</span>
<span class="t r" style="left:1174.50px;top:1059.00px;font-size:13px;color:#0a0a0a;">100.00%</span>
<span class="t r" style="left:1309.00px;top:1059.00px;font-size:13px;color:#0a0a0a;">1</span>
<span class="t r" style="left:1355.75px;top:1059.00px;font-size:13px;color:#0a0a0a;transform:scaleX(0.9643);">0</span>
<span class="t r" style="left:1415.50px;top:1059.00px;font-size:13px;color:#0a0a0a;transform:scaleX(0.9286);">0</span>
<span class="t r" style="left:1468.75px;top:1059.00px;font-size:13px;color:#0a0a0a;transform:scaleX(0.9643);">0</span>
<span class="t r" style="left:1523.52px;top:1059.00px;font-size:13px;color:#0a0a0a;transform:scaleX(0.9799);">EA (Each)</span>
<span class="t r" style="left:1737.50px;top:1059.00px;font-size:13px;color:#0a0a0a;transform:scaleX(0.9808);">0.0</span>
<div class="a" style="left:1899px;top:90px;width:21px;height:990px;background:#f1f1f1"></div>
<div class="a" style="left:1900px;top:110.3px;width:19px;height:380.5px;background:#c1c1c1"></div>
<svg style="left:1904.6px;top:97.3px" width="10" height="5.4" viewBox="0 0 10 5.4"><path d="M5 0 L10 5.4 H0 Z" fill="#8f8f8f"/></svg>
<svg style="left:1904.4px;top:1067px" width="10.4" height="5.4" viewBox="0 0 10.4 5.4"><path d="M0 0 H10.4 L5.2 5.4 Z" fill="#454545"/></svg>
<div class="a" style="left:1799px;top:980.5px;width:75px;height:75px;background:#5692ec;box-shadow:0 0 14px 3px rgba(0,0,0,.13)"></div>
<svg style="left:1818.9px;top:997.8px" width="36" height="41" viewBox="0 0 36 41"><path d="M3.4 0 H32 Q35.4 0 35.4 3.400 V40.4 L24.6 36.1 H3.4 Q0 36.1 0 32.7 V3.4 Q0 0 3.4 0 Z" fill="#fff"/><path d="M5.600 25.4 Q17.7 34.2 29.8 25.4" stroke="#4d84dc" stroke-width="1.9" fill="none" stroke-linecap="round"/></svg>
<div class="a" style="left:0;top:1078.6px;width:1920px;height:1.4px;background:#161616"></div>
</body>
</html>
